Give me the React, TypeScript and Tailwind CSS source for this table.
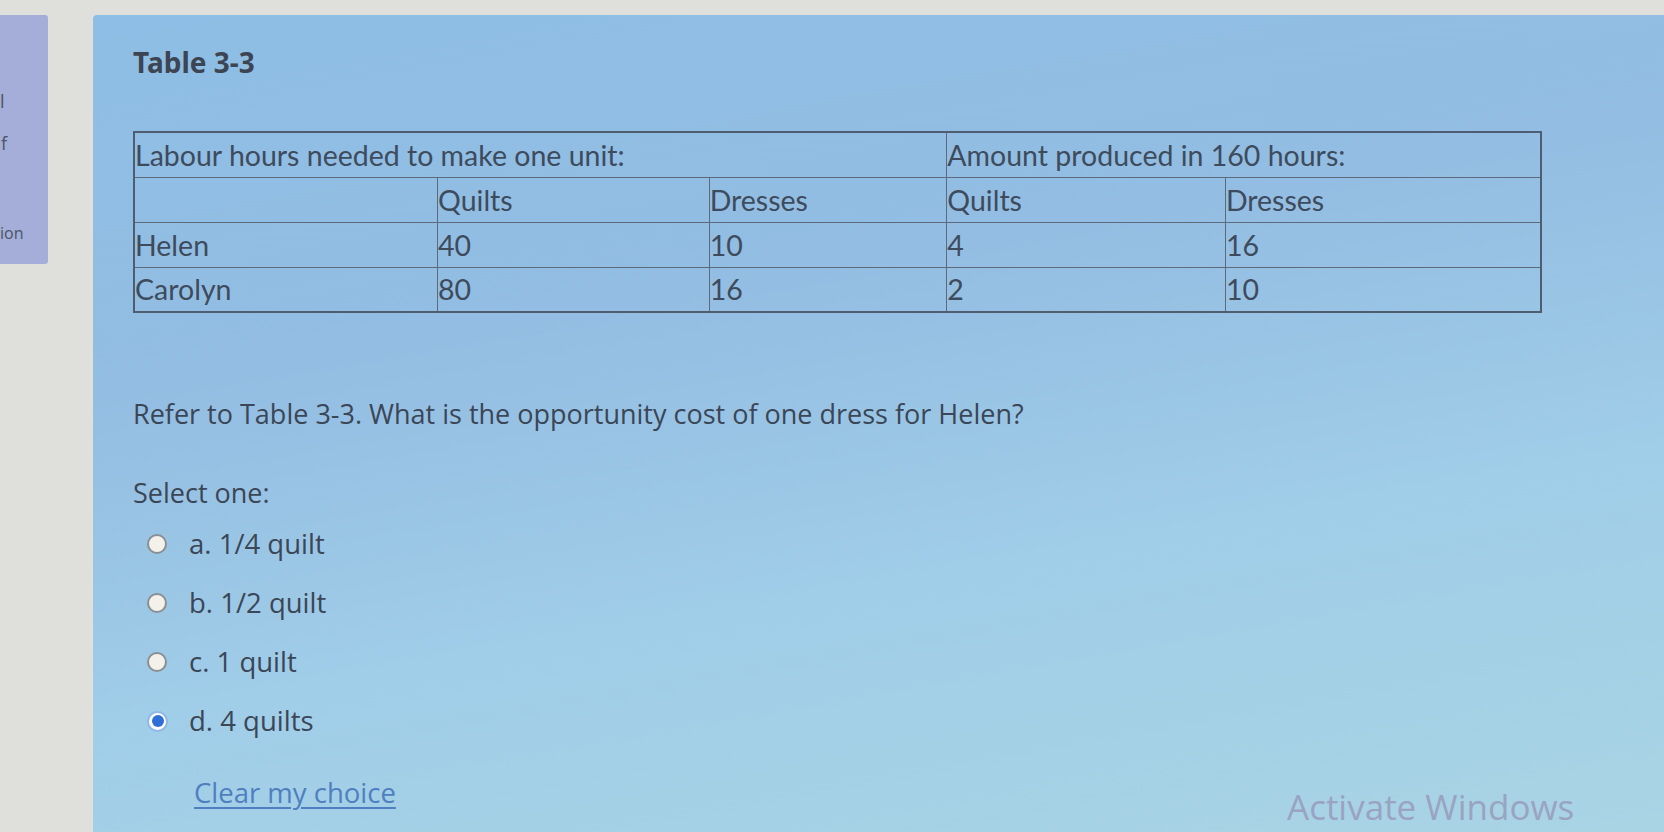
import React from "react";

const rows = [
  ["Helen", "40", "10", "4", "16"],
  ["Carolyn", "80", "16", "2", "10"],
];

const cell = "border-[1.5px] border-[#5b6b7c] px-0 text-left align-middle leading-[36px] h-[45px] font-normal";

function Radio({ checked }: { checked?: boolean }) {
  return checked ? (
    <span className="flex h-[21px] w-[21px] items-center justify-center rounded-full border-[2.5px] border-[#8fb8e8] bg-white">
      <span className="h-[12px] w-[12px] rounded-full bg-[#2f6fd6]" />
    </span>
  ) : (
    <span className="h-[20px] w-[20px] rounded-full border-[2.5px] border-[#8a8f94] bg-[#f3f1ea]" />
  );
}

export default function App() {
  const options = [
    { k: "a.", t: "1/4 quilt" },
    { k: "b.", t: "1/2 quilt" },
    { k: "c.", t: "1 quilt" },
    { k: "d.", t: "4 quilts", checked: true },
  ];
  return (
    <div className="relative h-[832px] w-[1664px] overflow-hidden bg-[#dfe0dc] pt-[15px]" style={{ fontFamily: "'Open Sans', 'Noto Sans', sans-serif" }}>
      <div className="flex h-full gap-[45px]">
        <div className="relative h-[249px] w-[48px] shrink-0 rounded-r-[3px] bg-[#a4aed8] text-[#4a5566]">
          <span className="absolute left-[0px] top-[76px] text-[18px] leading-[20px]">l</span>
          <span className="absolute left-[1px] top-[118px] text-[18px] leading-[20px]">f</span>
          <span className="absolute left-[0px] top-[208px] text-[16px] leading-[20px]">ion</span>
        </div>
        <div className="flex-1 rounded-tl-[4px] bg-[linear-gradient(170deg,#8ebee5_0%,#93bde2_35%,#a0cde8_65%,#a9d4e4_100%)] pl-[40px] text-[#3b4656]">
          <div className="pt-[30px] text-[28px] font-bold leading-[34px] text-[#3d4553]" style={{ fontFamily: "'Noto Sans', sans-serif" }}>Table 3-3</div>
          <table className="mt-[52px] w-[1409px] border-collapse border-[2px] border-[#4e5e70] text-[28.5px] text-[#3e4b5c]" style={{ fontFamily: "Lato, sans-serif" }}>
            <colgroup>
              <col className="w-[304px]" />
              <col className="w-[272px]" />
              <col className="w-[238px]" />
              <col className="w-[279px]" />
              <col className="w-[316px]" />
            </colgroup>
            <tbody>
              <tr>
                <td colSpan={3} className={cell}>Labour hours needed to make one unit:</td>
                <td colSpan={2} className={cell}>Amount produced in 160 hours:</td>
              </tr>
              <tr>
                <td className={cell}></td>
                <td className={cell}>Quilts</td>
                <td className={cell}>Dresses</td>
                <td className={cell}>Quilts</td>
                <td className={cell}>Dresses</td>
              </tr>
              {rows.map((r) => (
                <tr key={r[0]}>
                  {r.map((c, i) => (
                    <td key={i} className={cell}>{c}</td>
                  ))}
                </tr>
              ))}
            </tbody>
          </table>
          <p className="mt-[83px] text-[27px] leading-[36px] text-[#3b4656]">Refer to Table 3-3. What is the opportunity cost of one dress for Helen?</p>
          <p className="mt-[43px] text-[27px] leading-[36px] text-[#3b4656]">Select one:</p>
          <div className="mt-[15px] flex flex-col gap-[23px]">
            {options.map((o) => (
              <div key={o.k} className="flex h-[36px] items-center">
                <span className="ml-[14px] flex w-[42px] items-center"><Radio checked={o.checked} /></span>
                <span className="text-[27.5px] leading-[36px] text-[#3b4656]">{o.k} {o.t}</span>
              </div>
            ))}
          </div>
          <a className="ml-[61px] mt-[36px] inline-block text-[27.5px] leading-[36px] text-[#4f7fc0] underline decoration-[1.5px] underline-offset-[4px]">Clear my choice</a>
        </div>
      </div>
      <span className="absolute left-[1287px] top-[783px] text-[35px] leading-[48px] text-[#9aa3c2]">Activate Windows</span>
    </div>
  );
}
